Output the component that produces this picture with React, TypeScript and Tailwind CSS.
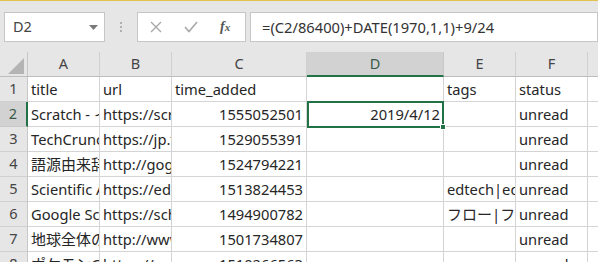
import React from "react";

const font = { fontFamily: '"Noto Sans", "Noto Sans CJK JP", sans-serif' };

const cols = [
  { key: "A", w: 72 },
  { key: "B", w: 72 },
  { key: "C", w: 135 },
  { key: "D", w: 137 },
  { key: "E", w: 72 },
  { key: "F", w: 72 },
  { key: "G", w: 40 },
];

type Cell = { t: string; right?: boolean; cjk?: boolean };
const rows: Cell[][] = [
  [{ t: "title" }, { t: "url" }, { t: "time_added" }, { t: "" }, { t: "tags" }, { t: "status" }],
  [{ t: "Scratch - イマジネーション" }, { t: "https://scratch.mit.edu" }, { t: "1555052501", right: true }, { t: "2019/4/12", right: true }, { t: "" }, { t: "unread" }],
  [{ t: "TechCrunch Japan" }, { t: "https://jp.techcrunch.com" }, { t: "1529055391", right: true }, { t: "" }, { t: "" }, { t: "unread" }],
  [{ t: "語源由来辞典", cjk: true }, { t: "http://gogen-allguide.com" }, { t: "1524794221", right: true }, { t: "" }, { t: "" }, { t: "unread" }],
  [{ t: "Scientific American" }, { t: "https://edsurge.com" }, { t: "1513824453", right: true }, { t: "" }, { t: "edtech|edtech" }, { t: "unread" }],
  [{ t: "Google Scholar" }, { t: "https://scholar.google.com" }, { t: "1494900782", right: true }, { t: "" }, { t: "フロー|フロー", cjk: true }, { t: "unread" }],
  [{ t: "地球全体の", cjk: true }, { t: "http://www.example.com" }, { t: "1501734807", right: true }, { t: "" }, { t: "" }, { t: "unread" }],
  [{ t: "ポケモンGO", cjk: true }, { t: "https://example.com" }, { t: "1510266563", right: true }, { t: "" }, { t: "" }, { t: "unread" }],
];

export default function App() {
  return (
    <div className="w-[598px] h-[262px] overflow-hidden bg-[#e6e6e6] text-[#262626]" style={font}>
      {/* top formula bar */}
      <div className="h-[52px] border-t-[1px] border-[#e2c14f] flex items-start pt-[11px]">
        <div className="ml-[4px] w-[101px] h-[30px] bg-white border border-[#c6c6c6] flex items-center justify-between pl-[8px] pr-[6px]">
          <span className="text-[14.5px] text-[#444]">D2</span>
          <svg width="9" height="5" viewBox="0 0 9 5"><path d="M0 0h9L4.5 5z" fill="#7a7a7a" /></svg>
        </div>
        <div className="w-[32px] h-[30px] flex items-center justify-center">
          <div className="flex flex-col gap-[2px]">
            <div className="w-[2px] h-[2px] bg-[#b0b0b0]" />
            <div className="w-[2px] h-[2px] bg-[#b0b0b0]" />
            <div className="w-[2px] h-[2px] bg-[#b0b0b0]" />
          </div>
        </div>
        <div className="w-[109px] h-[30px] bg-white border border-[#c6c6c6] flex items-center">
          <svg className="ml-[12px]" width="12" height="12" viewBox="0 0 12 12"><path d="M1 1l10 10M11 1L1 11" stroke="#a8a8a8" strokeWidth="1.4" /></svg>
          <svg className="ml-[22px]" width="14" height="12" viewBox="0 0 14 12"><path d="M1 6l4 4.5L13 1" stroke="#a8a8a8" strokeWidth="1.6" fill="none" /></svg>
          <span className="ml-[22px] text-[14px] italic font-bold text-[#555] leading-none" style={{ fontFamily: '"Liberation Serif", serif' }}>f<span className="text-[11px]">x</span></span>
        </div>
        <div className="ml-[4px] flex-1 h-[30px] bg-white border border-[#c6c6c6] flex items-center pl-[11px]">
          <span className="text-[14.7px] text-[#333] whitespace-nowrap">=(C2/86400)+DATE(1970,1,1)+9/24</span>
        </div>
      </div>

      {/* grid */}
      <div className="bg-white">
        {/* header row */}
        <div className="flex h-[25px] bg-[#e6e6e6] border-b border-[#bdbdbd]">
          <div className="w-[28px] shrink-0 border-r border-[#c8c8c8] relative">
            <svg className="absolute right-[3px] bottom-[2px]" width="16" height="16" viewBox="0 0 16 16"><path d="M16 0V16H0z" fill="#b4b4b4" /></svg>
          </div>
          {cols.map((c) => (
            <div
              key={c.key}
              className={
                c.key === "D"
                  ? "shrink-0 flex items-center justify-center text-[14.5px] bg-[#d2d2d2] text-[#3a5a48] border-r border-[#c8c8c8] border-b-2 border-b-[#217346] -mb-[1px]"
                  : "shrink-0 flex items-center justify-center text-[14.5px] text-[#444] border-r border-[#d0d0d0]"
              }
              style={{ width: c.w }}
            >
              {c.key === "G" ? "" : c.key}
            </div>
          ))}
        </div>
        {rows.map((r, i) => (
          <div key={i} className="flex h-[25px]">
            <div
              className={
                i === 1
                  ? "w-[28px] shrink-0 flex items-center justify-center text-[14.5px] bg-[#d2d2d2] text-[#3a5a48] border-r-2 border-[#217346] border-b border-b-[#c8c8c8]"
                  : "w-[28px] shrink-0 flex items-center justify-center text-[14.5px] bg-[#e6e6e6] text-[#444] border-r border-[#c8c8c8] border-b border-b-[#d0d0d0]"
              }
            >
              {i + 1}
            </div>
            {cols.map((c, j) => {
              const cell = r[j];
              return (
                <div
                  key={c.key}
                  className={
                    "shrink-0 flex items-center overflow-hidden whitespace-nowrap border-r border-b border-[#d4d4d4] " +
                    (cell && cell.cjk ? "text-[15px] " : "text-[14.7px] ") +
                    (cell && cell.right ? "justify-end pr-[3px]" : "justify-start pl-[3px]")
                  }
                  style={{ width: c.w }}
                >
                  {cell ? cell.t : ""}
                </div>
              );
            })}
          </div>
        ))}
      </div>
      {/* selection overlay */}
      <div className="absolute left-[307px] top-[101px] w-[137px] h-[27px] border-2 border-[#217346] pointer-events-none" />
      <div className="absolute left-[440px] top-[124px] w-[6px] h-[6px] bg-[#217346] border border-white pointer-events-none" />
    </div>
  );
}
